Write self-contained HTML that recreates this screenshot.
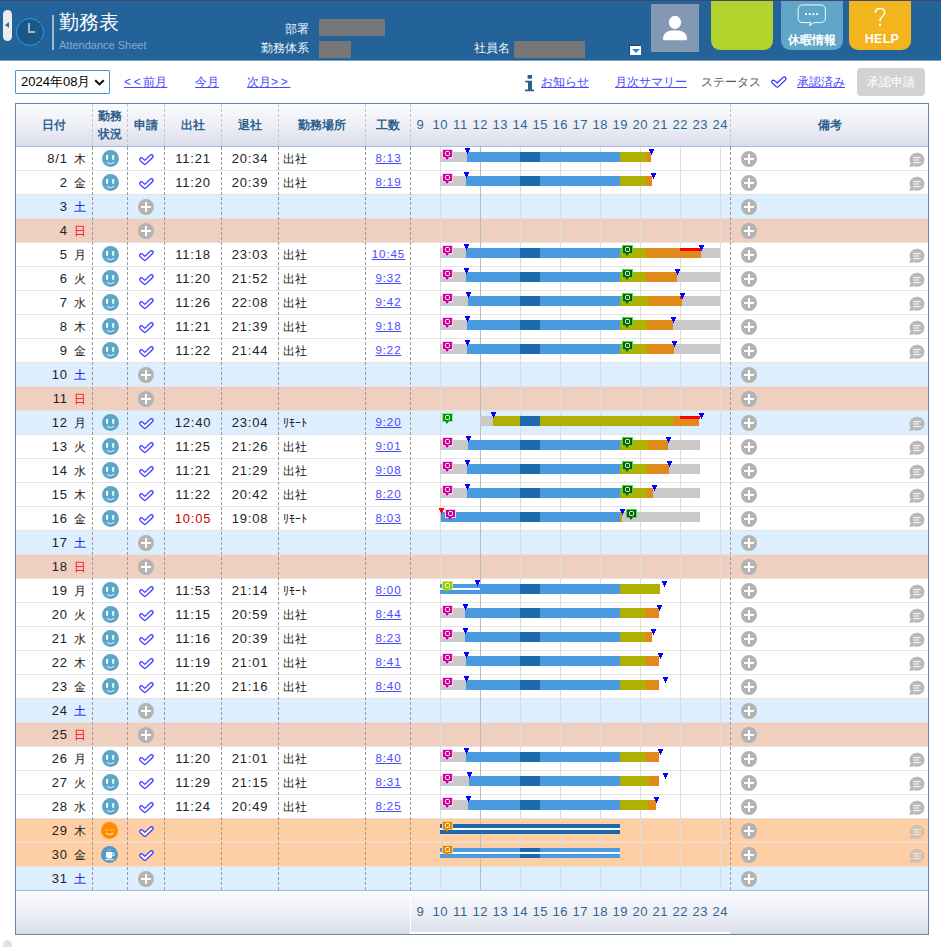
<!-- DOMAINTAG -->
<!DOCTYPE html>
<html lang="ja">
<head>
<meta charset="utf-8">
<title>勤務表</title>
<style>
*{box-sizing:border-box;margin:0;padding:0}
html,body{width:941px;height:947px;overflow:hidden;background:#fff}
body{position:relative;font-family:"Liberation Sans",sans-serif;font-size:12px;color:#222;line-height:1}
i{font-style:normal;display:block}
a{color:#4848ff;text-decoration:underline;cursor:pointer}
.n{font-size:13px;letter-spacing:.75px;line-height:1}a.n{font-size:11.5px;letter-spacing:.9px;position:relative;top:-1px;margin-right:-.9px}
.abs{position:absolute}
/* ---------- header ---------- */
#hd{position:absolute;left:0;top:0;width:941px;height:61px;background:linear-gradient(#236399,#236399 59px,#7ba1c2 59px);border-top:1px solid #40466e}
#tab{position:absolute;left:3px;top:9px;width:9px;height:31px;background:#ededed;border-radius:4.5px}
#tab:after{content:"";position:absolute;left:2px;top:12px;border-top:3px solid transparent;border-bottom:3px solid transparent;border-right:4.5px solid #2a6db3}
#clk{position:absolute;left:15.5px;top:17px;width:28px;height:28px;border-radius:50%;background:#1d5788;border:1.4px solid #1ca2e6}
#clk:before{content:"";position:absolute;left:11.1px;top:3.6px;width:2px;height:10px;background:#a3b8d0}
#clk:after{content:"";position:absolute;left:11.1px;top:11.6px;width:7px;height:2px;background:#a3b8d0}
#vl{position:absolute;left:52px;top:14px;width:2px;height:35px;background:#9fb9d2}
#t1{position:absolute;left:59px;top:10px;font-size:19.5px;line-height:22px;color:#fff;white-space:nowrap}
#t2{position:absolute;left:59px;top:37px;font-size:11px;line-height:14px;color:#86abcd;white-space:nowrap}
.hl{position:absolute;color:#eef3f8;font-size:12px;line-height:16px;white-space:nowrap}
.gb{position:absolute;background:#777;height:17px}
#dd{position:absolute;left:630px;top:45px;width:11px;height:9px;background:#fff;box-shadow:-.7px -.7px 0 .3px #203c78}
#dd:after{content:"";position:absolute;left:1.5px;top:2.5px;border-left:4px solid transparent;border-right:4px solid transparent;border-top:4.5px solid #1c8be0}
#av{position:absolute;left:651px;top:3px;width:48px;height:48px;background:#8399b3}
.hb{position:absolute;top:0;width:62px;height:49px;border-radius:0 0 9px 9px;color:#fff;text-align:center}
/* ---------- toolbar ---------- */
#sel{position:absolute;left:15px;top:70px;width:95px;height:24px;border:1px solid #4f95d0;border-radius:1px;font-size:13px;line-height:22px;padding-left:5px;color:#000;white-space:nowrap}
.lk{position:absolute;top:74px;font-size:12px;line-height:16px;white-space:nowrap}
.sp{letter-spacing:2.7px}
#btn{position:absolute;left:857px;top:68px;width:68px;height:28px;background:#d2d2d2;border-radius:4px;color:#fff;font-size:12px;line-height:28px;text-align:center;white-space:nowrap}
/* ---------- table ---------- */
#frame{position:absolute;left:15px;top:103px;width:914px;height:832px;border:1px solid #6687ab;z-index:9;pointer-events:none}
#th{position:absolute;left:16px;top:104px;width:912px;height:42px;background:linear-gradient(#fafbfd,#eceef5 55%,#dadeea);color:#2c5f8c;font-weight:bold;font-size:12px}
#th div{position:absolute;top:0;height:42px;line-height:42px;text-align:center;white-space:nowrap}
#thl{position:absolute;left:16px;top:146px;width:912px;height:1px;background:#a5bbe4;z-index:5}
.hrs{position:absolute;left:410px;width:320px;height:42px;color:#2e6597;font-size:13px;font-weight:normal;letter-spacing:.75px;white-space:nowrap}
.hrs span{position:absolute;top:0;width:24px;height:42px;line-height:42px;text-align:center;text-indent:.75px}
.dv{position:absolute;top:104px;width:1px;z-index:6}
.dvh{height:42px;background:repeating-linear-gradient(#c2c5d1 0,#c2c5d1 3px,transparent 3px,transparent 5px)}
.dvb{top:147px;height:743px;background:repeating-linear-gradient(#9a9a9a 0,#9a9a9a 3px,transparent 3px,transparent 5px)}
.r{position:absolute;left:16px;width:912px;height:24px;background:#fff;box-shadow:inset 0 1px #e3e3e3}
.sat{background:#ddeeff}
.sun{background:#eecfc0}
.lv{background:#fecfa4}
.c{position:absolute;top:1px;height:23px;line-height:25px;white-space:nowrap;overflow:hidden}
.d{left:0;width:76px;text-align:right;padding-right:6px}.d .n{margin-right:3px}
.sa{color:#00f}.su{color:#f00}
.st{left:77px;width:34px}
.ap{left:112px;width:36px}
.ti{left:149px;width:56px;text-align:center}
.to{left:206px;width:56px;text-align:center}
.lo{left:263px;width:86px;padding-left:4px}
.hr{left:350px;width:44px;text-align:center}
.tl{left:395px;width:319px;top:0;height:24px;overflow:visible;background:linear-gradient(#bbb,#bbb) 69px 0/1px 100% no-repeat,repeating-linear-gradient(90deg,#ddd 0,#ddd 1px,transparent 1px,transparent 40px) 29px 0/300px 100% no-repeat}
.nt{left:715px;width:197px}
.dr{color:#c00}
/* icons */
.fc{position:absolute;left:9px;top:3px;width:17px;height:17px;border-radius:50%;background:#5ba5c6}
.fo{background:#ff8c00;left:8px}.fk{background:#4f9ac8;left:8px}
.pl{position:absolute;left:10px;top:4px;width:16px;height:16px;border-radius:50%;background:#b3b3b3}
.pl:before{content:"";position:absolute;left:3px;top:6.75px;width:10px;height:2.5px;background:#fff}
.pl:after{content:"";position:absolute;left:6.75px;top:3px;width:2.5px;height:10px;background:#fff}
.nt .pl{left:10px}
.ck{position:absolute;left:10px;top:6px}
.lv .cm{opacity:.62}
.cm{position:absolute;left:177px;top:4.5px;width:17px;height:17px}
/* timeline */
.s{position:absolute;top:6px;height:10px}
.gr{background:#c9c9c9}.bl{background:#4a9ae1}.db{background:#1c69ae}.ol{background:#b0b000}.or{background:#e08a1c}.rd{background:#f00}.wh{background:#fff}
.p{position:absolute;top:3px;width:11px;height:9px;border:1px solid;z-index:2}
.p:before{content:"";position:absolute;left:2px;top:1px;width:3px;height:3px;border:1px solid #fff;border-radius:1.5px}
.p:after{content:"";position:absolute;left:2px;top:7px;border-left:2.5px solid transparent;border-right:2.5px solid transparent;border-top:3px solid}
.pk{background:#c09;border-color:#fce;color:#c09}
.gn{background:#060;border-color:#4d5;color:#060}
.g2{background:#090;border-color:#8e8;color:#090}
.yg{background:#9c0;border-color:#ce6;color:#9c0}
.og{background:#d80;border-color:#fc7;color:#d80}
.m{position:absolute;width:5px;height:6px;z-index:3;--c:#00f;background:linear-gradient(var(--c),var(--c)) 0 0/5px 2px no-repeat,linear-gradient(var(--c),var(--c)) 1px 2px/3px 2px no-repeat,linear-gradient(var(--c),var(--c)) 2px 4px/1px 2px no-repeat}
.mr{--c:#f00}
/* footer */
#ft{position:absolute;left:16px;top:890px;width:912px;height:44px;background:linear-gradient(#fafbfd,#eceef5 55%,#dadeea);border-top:1px solid #a5bbe4}
#ftb{position:absolute;left:394px;top:0;width:320px;height:43px;border-left:1px solid #fff;border-bottom:2px solid #fff;border-top:1px solid #fff}
#blob{position:absolute;left:3px;top:940px;width:9px;height:20px;border-radius:4.5px;background:#e3e3e3}
</style>
</head>
<body>
<svg width="0" height="0" style="position:absolute">
<defs>
<symbol id="ck" viewBox="0 0 17 13"><path d="M3.3 6.4 L6.85 9.6 L13.5 3.3" fill="none" stroke="#2424ff" stroke-width="4.4" stroke-linecap="round" stroke-linejoin="round"/><path d="M3.3 6.4 L6.85 9.6 L13.5 3.3" fill="none" stroke="#fff" stroke-width="2.2" stroke-linecap="round" stroke-linejoin="round"/></symbol>
<symbol id="fc" viewBox="0 0 17 17"><rect x="4.1" y="5" width="2" height="4.8" rx=".6" fill="#f4fafc"/><rect x="10.2" y="5" width="2" height="4.8" rx=".6" fill="#f4fafc"/><path d="M4.9 12.1 Q8.4 14.9 12 12.1" fill="none" stroke="#dcedf4" stroke-width="1.2"/></symbol>
<symbol id="fo" viewBox="0 0 17 17"><path d="M3.8 7.6 Q5.6 9.3 7.3 7.6 M9.7 7.6 Q11.4 9.3 13.2 7.6" fill="none" stroke="#ffc98c" stroke-width="1"/><path d="M4.8 11 Q8.5 14.2 12.2 11" fill="none" stroke="#ffd9ae" stroke-width="1.2"/></symbol>
<symbol id="fk" viewBox="0 0 17 17"><path d="M5 6 H11.2 V10.2 Q11.2 12.4 9 12.4 H7.2 Q5 12.4 5 10.2Z" fill="#fff"/><path d="M11.2 7 H12.2 Q13.4 7 13.4 8.3 Q13.4 9.6 12.2 9.6 H11.2" fill="none" stroke="#fff" stroke-width="1"/><rect x="4" y="13.2" width="9" height="1" fill="#e8f2f8"/><path d="M6.5 4.3 Q7.3 3.3 8.2 4.1 T9.8 3.8" fill="none" stroke="#cfe3ef" stroke-width=".7"/></symbol>
<symbol id="cm" viewBox="0 0 17 17"><ellipse cx="9" cy="7.8" rx="7.5" ry="7" fill="#b8b8b8"/><path d="M2.6 11 L1.1 14.9 L6.5 14.2Z" fill="#b8b8b8"/><rect x="5.1" y="5.1" width="7.8" height="1" fill="#fafafa"/><rect x="5.5" y="6.9" width="5.5" height="2" fill="#e0e0e0"/><rect x="5.1" y="10.1" width="7.8" height="1" fill="#fafafa"/></symbol>
</defs>
</svg>

<!-- header -->
<div id="hd">
 <div id="tab"></div>
 <div id="clk"></div>
 <div id="vl"></div>
 <div id="t1">勤務表</div>
 <div id="t2">Attendance Sheet</div>
 <div class="hl" style="left:248px;width:61px;text-align:right;top:20px">部署</div>
 <div class="gb" style="left:319px;top:18px;width:66px"></div>
 <div class="hl" style="left:248px;width:61px;text-align:right;top:39px">勤務体系</div>
 <div class="gb" style="left:319px;top:40px;width:32px"></div>
 <div class="hl" style="left:474px;top:39px">社員名</div>
 <div class="gb" style="left:514px;top:40px;width:71px"></div>
 <div id="dd"></div>
 <div id="av"><svg width="48" height="48" viewBox="0 0 48 48"><ellipse cx="24" cy="18.4" rx="6.1" ry="6.6" fill="#fff"/><path d="M12 34.9 Q12 26.2 24 26.2 Q36 26.2 36 34.9 Q36 36.2 34.6 36.2 L13.4 36.2 Q12 36.2 12 34.9Z" fill="#fff"/></svg></div>
 <div class="hb" style="left:711px;background:#b2d32b"></div>
 <div class="hb" style="left:781px;background:#5fa6c8">
  <svg width="62" height="30" viewBox="0 0 62 30" style="position:absolute;left:0;top:0"><path d="M22 3.9 H39.5 Q44.4 3.9 44.4 8.8 V16.7 Q44.4 21.6 39.5 21.6 H33.2 L28.4 24.8 L29.9 21.6 H22 Q17.1 21.6 17.1 16.7 V8.8 Q17.1 3.9 22 3.9Z" fill="none" stroke="#f4f8fb" stroke-width="1"/><rect x="24" y="12.2" width="1.9" height="1.9" fill="#fff"/><rect x="27.7" y="12.2" width="1.9" height="1.9" fill="#fff"/><rect x="31.5" y="12.2" width="1.9" height="1.9" fill="#fff"/><rect x="35.2" y="12.2" width="1.9" height="1.9" fill="#fff"/></svg>
  <div style="position:absolute;left:0;top:30.5px;width:62px;font-size:12px;line-height:16px;font-weight:bold;white-space:nowrap">休暇情報</div>
 </div>
 <div class="hb" style="left:849px;background:#f2b51e">
  <svg width="62" height="30" viewBox="0 0 62 30" style="position:absolute;left:0;top:0"><path d="M26.3 12 Q26.3 7.6 31 7.6 Q35.7 7.6 35.7 11.6 Q35.7 14 33 16 Q31 17.6 31 20.2" fill="none" stroke="#fff" stroke-width="1.5"/><rect x="30.1" y="22.6" width="1.9" height="2.2" fill="#fff"/></svg>
  <div style="position:absolute;left:0;top:30px;width:62px;font-size:12.5px;line-height:17px;font-weight:bold;letter-spacing:.3px;text-indent:4px">HELP</div>
 </div>
</div>

<!-- toolbar -->
<div id="sel">2024年08月<svg width="11" height="7" viewBox="0 0 11 7" style="position:absolute;left:78px;top:8px"><path d="M1.2 1.2 L5.5 5.4 L9.8 1.2" fill="none" stroke="#111" stroke-width="2.1"/></svg></div>
<a class="lk" style="left:124px"><span class="sp">&lt;&lt;</span>前月</a>
<a class="lk" style="left:195px">今月</a>
<a class="lk" style="left:247px">次月<span class="sp">&gt;&gt;</span></a>
<svg class="abs" style="left:524px;top:74px" width="11" height="18" viewBox="0 0 11 18"><path d="M3.6 1 H8 V4.8 H3.6Z M1.2 6.8 H8 V15.4 H10 V17.2 H1 V15.4 H4 V8.4 H1.2Z" fill="#2c5f8c"/></svg>
<a class="lk" style="left:541px">お知らせ</a>
<a class="lk" style="left:615px">月次サマリー</a>
<div class="lk" style="left:701px;color:#555">ステータス</div>
<svg class="abs" style="left:770px;top:75px" width="18" height="14" viewBox="0 0 17 13"><use href="#ck"/></svg>
<a class="lk" style="left:797px">承認済み</a>
<div id="btn">承認申請</div>

<!-- table -->
<div id="frame"></div>
<div id="th">
 <div style="left:0;width:76px">日付</div>
 <div style="left:77px;width:34px;line-height:18px;padding-top:3px">勤務<br>状況</div>
 <div style="left:112px;width:36px">申請</div>
 <div style="left:149px;width:56px">出社</div>
 <div style="left:206px;width:56px">退社</div>
 <div style="left:263px;width:86px">勤務場所</div>
 <div style="left:350px;width:44px">工数</div>
 <div class="hrs" style="left:394px"><span style="left:-2px">9</span><span style="left:18px">10</span><span style="left:38px">11</span><span style="left:58px">12</span><span style="left:78px">13</span><span style="left:98px">14</span><span style="left:118px">15</span><span style="left:138px">16</span><span style="left:158px">17</span><span style="left:178px">18</span><span style="left:198px">19</span><span style="left:218px">20</span><span style="left:238px">21</span><span style="left:258px">22</span><span style="left:278px">23</span><span style="left:298px">24</span></div>
 <div style="left:715px;width:197px">備考</div>
</div>
<div id="thl"></div>
<i class="dv dvh" style="left:92px"></i><i class="dv dvb" style="left:92px"></i><i class="dv dvh" style="left:127px"></i><i class="dv dvb" style="left:127px"></i><i class="dv dvh" style="left:164px"></i><i class="dv dvb" style="left:164px"></i><i class="dv dvh" style="left:221px"></i><i class="dv dvb" style="left:221px"></i><i class="dv dvh" style="left:278px"></i><i class="dv dvb" style="left:278px"></i><i class="dv dvh" style="left:365px"></i><i class="dv dvb" style="left:365px"></i><i class="dv dvh" style="left:410px"></i><i class="dv dvb" style="left:410px"></i><i class="dv dvh" style="left:730px"></i><i class="dv dvb" style="left:730px"></i>
<div class="r" style="top:146px"><div class="c d"><span class="n">8/1</span> <span>木</span></div><div class="c st"><svg class="fc" width="17" height="17" viewBox="0 0 17 17"><use href="#fc"/></svg></div><div class="c ap"><svg class="ck" width="17" height="13" viewBox="0 0 17 13"><use href="#ck"/></svg></div><div class="c ti"><span class="n">11:21</span></div><div class="c to"><span class="n">20:34</span></div><div class="c lo">出社</div><div class="c hr"><a class="n">8:13</a></div><div class="c tl"><i class="s gr" style="left:29px;width:27px"></i><i class="s bl" style="left:56px;width:153px"></i><i class="s db" style="left:109px;width:20px"></i><i class="s ol" style="left:209px;width:27px"></i><i class="s or" style="left:236px;width:4px"></i><i class="p pk" style="left:31px"></i><i class="m mb" style="left:54px;top:2px"></i><i class="m mb" style="left:238px;top:3px"></i></div><div class="c nt"><i class="pl"></i><svg class="cm" width="17" height="17" viewBox="0 0 17 17"><use href="#cm"/></svg></div></div>
<div class="r" style="top:170px"><div class="c d"><span class="n">2</span> <span>金</span></div><div class="c st"><svg class="fc" width="17" height="17" viewBox="0 0 17 17"><use href="#fc"/></svg></div><div class="c ap"><svg class="ck" width="17" height="13" viewBox="0 0 17 13"><use href="#ck"/></svg></div><div class="c ti"><span class="n">11:20</span></div><div class="c to"><span class="n">20:39</span></div><div class="c lo">出社</div><div class="c hr"><a class="n">8:19</a></div><div class="c tl"><i class="s gr" style="left:29px;width:26px"></i><i class="s bl" style="left:55px;width:154px"></i><i class="s db" style="left:109px;width:20px"></i><i class="s ol" style="left:209px;width:26px"></i><i class="s or" style="left:235px;width:6px"></i><i class="p pk" style="left:31px"></i><i class="m mb" style="left:53px;top:2px"></i><i class="m mb" style="left:240px;top:3px"></i></div><div class="c nt"><i class="pl"></i><svg class="cm" width="17" height="17" viewBox="0 0 17 17"><use href="#cm"/></svg></div></div>
<div class="r sat" style="top:194px"><div class="c d"><span class="n">3</span> <span class="sa">土</span></div><div class="c st"></div><div class="c ap"><i class="pl"></i></div><div class="c ti"></div><div class="c to"></div><div class="c lo"></div><div class="c hr"></div><div class="c tl"></div><div class="c nt"><i class="pl"></i></div></div>
<div class="r sun" style="top:218px"><div class="c d"><span class="n">4</span> <span class="su">日</span></div><div class="c st"></div><div class="c ap"><i class="pl"></i></div><div class="c ti"></div><div class="c to"></div><div class="c lo"></div><div class="c hr"></div><div class="c tl"></div><div class="c nt"><i class="pl"></i></div></div>
<div class="r" style="top:242px"><div class="c d"><span class="n">5</span> <span>月</span></div><div class="c st"><svg class="fc" width="17" height="17" viewBox="0 0 17 17"><use href="#fc"/></svg></div><div class="c ap"><svg class="ck" width="17" height="13" viewBox="0 0 17 13"><use href="#ck"/></svg></div><div class="c ti"><span class="n">11:18</span></div><div class="c to"><span class="n">23:03</span></div><div class="c lo">出社</div><div class="c hr"><a class="n">10:45</a></div><div class="c tl"><i class="s gr" style="left:29px;width:26px"></i><i class="s bl" style="left:55px;width:154px"></i><i class="s db" style="left:109px;width:20px"></i><i class="s ol" style="left:209px;width:26px"></i><i class="s or" style="left:235px;width:55px"></i><i class="s rd" style="left:269px;width:21px;top:6px;height:3px"></i><i class="s gr" style="left:290px;width:19px"></i><i class="p pk" style="left:31px"></i><i class="p gn" style="left:211px"></i><i class="m mb" style="left:53px;top:2px"></i><i class="m mb" style="left:288px;top:3px"></i></div><div class="c nt"><i class="pl"></i><svg class="cm" width="17" height="17" viewBox="0 0 17 17"><use href="#cm"/></svg></div></div>
<div class="r" style="top:266px"><div class="c d"><span class="n">6</span> <span>火</span></div><div class="c st"><svg class="fc" width="17" height="17" viewBox="0 0 17 17"><use href="#fc"/></svg></div><div class="c ap"><svg class="ck" width="17" height="13" viewBox="0 0 17 13"><use href="#ck"/></svg></div><div class="c ti"><span class="n">11:20</span></div><div class="c to"><span class="n">21:52</span></div><div class="c lo">出社</div><div class="c hr"><a class="n">9:32</a></div><div class="c tl"><i class="s gr" style="left:29px;width:26px"></i><i class="s bl" style="left:55px;width:154px"></i><i class="s db" style="left:109px;width:20px"></i><i class="s ol" style="left:209px;width:26px"></i><i class="s or" style="left:235px;width:31px"></i><i class="s gr" style="left:266px;width:43px"></i><i class="p pk" style="left:31px"></i><i class="p gn" style="left:211px"></i><i class="m mb" style="left:53px;top:2px"></i><i class="m mb" style="left:264px;top:3px"></i></div><div class="c nt"><i class="pl"></i><svg class="cm" width="17" height="17" viewBox="0 0 17 17"><use href="#cm"/></svg></div></div>
<div class="r" style="top:290px"><div class="c d"><span class="n">7</span> <span>水</span></div><div class="c st"><svg class="fc" width="17" height="17" viewBox="0 0 17 17"><use href="#fc"/></svg></div><div class="c ap"><svg class="ck" width="17" height="13" viewBox="0 0 17 13"><use href="#ck"/></svg></div><div class="c ti"><span class="n">11:26</span></div><div class="c to"><span class="n">22:08</span></div><div class="c lo">出社</div><div class="c hr"><a class="n">9:42</a></div><div class="c tl"><i class="s gr" style="left:29px;width:28px"></i><i class="s bl" style="left:57px;width:152px"></i><i class="s db" style="left:109px;width:20px"></i><i class="s ol" style="left:209px;width:28px"></i><i class="s or" style="left:237px;width:34px"></i><i class="s rd" style="left:269px;width:2px;top:6px;height:3px"></i><i class="s gr" style="left:271px;width:38px"></i><i class="p pk" style="left:31px"></i><i class="p gn" style="left:211px"></i><i class="m mb" style="left:55px;top:2px"></i><i class="m mb" style="left:269px;top:3px"></i></div><div class="c nt"><i class="pl"></i><svg class="cm" width="17" height="17" viewBox="0 0 17 17"><use href="#cm"/></svg></div></div>
<div class="r" style="top:314px"><div class="c d"><span class="n">8</span> <span>木</span></div><div class="c st"><svg class="fc" width="17" height="17" viewBox="0 0 17 17"><use href="#fc"/></svg></div><div class="c ap"><svg class="ck" width="17" height="13" viewBox="0 0 17 13"><use href="#ck"/></svg></div><div class="c ti"><span class="n">11:21</span></div><div class="c to"><span class="n">21:39</span></div><div class="c lo">出社</div><div class="c hr"><a class="n">9:18</a></div><div class="c tl"><i class="s gr" style="left:29px;width:27px"></i><i class="s bl" style="left:56px;width:153px"></i><i class="s db" style="left:109px;width:20px"></i><i class="s ol" style="left:209px;width:27px"></i><i class="s or" style="left:236px;width:26px"></i><i class="s gr" style="left:262px;width:47px"></i><i class="p pk" style="left:31px"></i><i class="p gn" style="left:211px"></i><i class="m mb" style="left:54px;top:2px"></i><i class="m mb" style="left:260px;top:3px"></i></div><div class="c nt"><i class="pl"></i><svg class="cm" width="17" height="17" viewBox="0 0 17 17"><use href="#cm"/></svg></div></div>
<div class="r" style="top:338px"><div class="c d"><span class="n">9</span> <span>金</span></div><div class="c st"><svg class="fc" width="17" height="17" viewBox="0 0 17 17"><use href="#fc"/></svg></div><div class="c ap"><svg class="ck" width="17" height="13" viewBox="0 0 17 13"><use href="#ck"/></svg></div><div class="c ti"><span class="n">11:22</span></div><div class="c to"><span class="n">21:44</span></div><div class="c lo">出社</div><div class="c hr"><a class="n">9:22</a></div><div class="c tl"><i class="s gr" style="left:29px;width:27px"></i><i class="s bl" style="left:56px;width:153px"></i><i class="s db" style="left:109px;width:20px"></i><i class="s ol" style="left:209px;width:27px"></i><i class="s or" style="left:236px;width:27px"></i><i class="s gr" style="left:263px;width:46px"></i><i class="p pk" style="left:31px"></i><i class="p gn" style="left:211px"></i><i class="m mb" style="left:54px;top:2px"></i><i class="m mb" style="left:261px;top:3px"></i></div><div class="c nt"><i class="pl"></i><svg class="cm" width="17" height="17" viewBox="0 0 17 17"><use href="#cm"/></svg></div></div>
<div class="r sat" style="top:362px"><div class="c d"><span class="n">10</span> <span class="sa">土</span></div><div class="c st"></div><div class="c ap"><i class="pl"></i></div><div class="c ti"></div><div class="c to"></div><div class="c lo"></div><div class="c hr"></div><div class="c tl"></div><div class="c nt"><i class="pl"></i></div></div>
<div class="r sun" style="top:386px"><div class="c d"><span class="n">11</span> <span class="su">日</span></div><div class="c st"></div><div class="c ap"><i class="pl"></i></div><div class="c ti"></div><div class="c to"></div><div class="c lo"></div><div class="c hr"></div><div class="c tl"></div><div class="c nt"><i class="pl"></i></div></div>
<div class="r sat" style="top:410px"><div class="c d"><span class="n">12</span> <span>月</span></div><div class="c st"><svg class="fc" width="17" height="17" viewBox="0 0 17 17"><use href="#fc"/></svg></div><div class="c ap"><svg class="ck" width="17" height="13" viewBox="0 0 17 13"><use href="#ck"/></svg></div><div class="c ti"><span class="n">12:40</span></div><div class="c to"><span class="n">23:04</span></div><div class="c lo">ﾘﾓｰﾄ</div><div class="c hr"><a class="n">9:20</a></div><div class="c tl"><i class="s gr" style="left:69px;width:13px"></i><i class="s ol" style="left:82px;width:180px"></i><i class="s db" style="left:109px;width:20px"></i><i class="s or" style="left:262px;width:26px"></i><i class="s rd" style="left:269px;width:20px;top:6px;height:3px"></i><i class="p g2" style="left:31px"></i><i class="m mb" style="left:80px;top:2px"></i><i class="m mb" style="left:288px;top:3px"></i></div><div class="c nt"><i class="pl"></i><svg class="cm" width="17" height="17" viewBox="0 0 17 17"><use href="#cm"/></svg></div></div>
<div class="r" style="top:434px"><div class="c d"><span class="n">13</span> <span>火</span></div><div class="c st"><svg class="fc" width="17" height="17" viewBox="0 0 17 17"><use href="#fc"/></svg></div><div class="c ap"><svg class="ck" width="17" height="13" viewBox="0 0 17 13"><use href="#ck"/></svg></div><div class="c ti"><span class="n">11:25</span></div><div class="c to"><span class="n">21:26</span></div><div class="c lo">出社</div><div class="c hr"><a class="n">9:01</a></div><div class="c tl"><i class="s gr" style="left:29px;width:28px"></i><i class="s bl" style="left:57px;width:152px"></i><i class="s db" style="left:109px;width:20px"></i><i class="s ol" style="left:209px;width:28px"></i><i class="s or" style="left:237px;width:20px"></i><i class="s gr" style="left:257px;width:32px"></i><i class="p pk" style="left:31px"></i><i class="p gn" style="left:211px"></i><i class="m mb" style="left:55px;top:2px"></i><i class="m mb" style="left:255px;top:3px"></i></div><div class="c nt"><i class="pl"></i><svg class="cm" width="17" height="17" viewBox="0 0 17 17"><use href="#cm"/></svg></div></div>
<div class="r" style="top:458px"><div class="c d"><span class="n">14</span> <span>水</span></div><div class="c st"><svg class="fc" width="17" height="17" viewBox="0 0 17 17"><use href="#fc"/></svg></div><div class="c ap"><svg class="ck" width="17" height="13" viewBox="0 0 17 13"><use href="#ck"/></svg></div><div class="c ti"><span class="n">11:21</span></div><div class="c to"><span class="n">21:29</span></div><div class="c lo">出社</div><div class="c hr"><a class="n">9:08</a></div><div class="c tl"><i class="s gr" style="left:29px;width:27px"></i><i class="s bl" style="left:56px;width:153px"></i><i class="s db" style="left:109px;width:20px"></i><i class="s ol" style="left:209px;width:27px"></i><i class="s or" style="left:236px;width:22px"></i><i class="s gr" style="left:258px;width:31px"></i><i class="p pk" style="left:31px"></i><i class="p gn" style="left:211px"></i><i class="m mb" style="left:54px;top:2px"></i><i class="m mb" style="left:256px;top:3px"></i></div><div class="c nt"><i class="pl"></i><svg class="cm" width="17" height="17" viewBox="0 0 17 17"><use href="#cm"/></svg></div></div>
<div class="r" style="top:482px"><div class="c d"><span class="n">15</span> <span>木</span></div><div class="c st"><svg class="fc" width="17" height="17" viewBox="0 0 17 17"><use href="#fc"/></svg></div><div class="c ap"><svg class="ck" width="17" height="13" viewBox="0 0 17 13"><use href="#ck"/></svg></div><div class="c ti"><span class="n">11:22</span></div><div class="c to"><span class="n">20:42</span></div><div class="c lo">出社</div><div class="c hr"><a class="n">8:20</a></div><div class="c tl"><i class="s gr" style="left:29px;width:27px"></i><i class="s bl" style="left:56px;width:153px"></i><i class="s db" style="left:109px;width:20px"></i><i class="s ol" style="left:209px;width:27px"></i><i class="s or" style="left:236px;width:6px"></i><i class="s gr" style="left:242px;width:47px"></i><i class="p pk" style="left:31px"></i><i class="p gn" style="left:211px"></i><i class="m mb" style="left:54px;top:2px"></i><i class="m mb" style="left:241px;top:3px"></i></div><div class="c nt"><i class="pl"></i><svg class="cm" width="17" height="17" viewBox="0 0 17 17"><use href="#cm"/></svg></div></div>
<div class="r" style="top:506px"><div class="c d"><span class="n">16</span> <span>金</span></div><div class="c st"><svg class="fc" width="17" height="17" viewBox="0 0 17 17"><use href="#fc"/></svg></div><div class="c ap"><svg class="ck" width="17" height="13" viewBox="0 0 17 13"><use href="#ck"/></svg></div><div class="c ti"><span class="n dr">10:05</span></div><div class="c to"><span class="n">19:08</span></div><div class="c lo">ﾘﾓｰﾄ</div><div class="c hr"><a class="n">8:03</a></div><div class="c tl"><i class="s gr" style="left:29px;width:1px"></i><i class="s bl" style="left:30px;width:179px"></i><i class="s db" style="left:109px;width:20px"></i><i class="s ol" style="left:209px;width:1px"></i><i class="s or" style="left:210px;width:1px"></i><i class="s gr" style="left:211px;width:78px"></i><i class="p pk" style="left:34px"></i><i class="p gn" style="left:215px"></i><i class="m mr" style="left:28px;top:2px"></i><i class="m mb" style="left:209px;top:3px"></i></div><div class="c nt"><i class="pl"></i><svg class="cm" width="17" height="17" viewBox="0 0 17 17"><use href="#cm"/></svg></div></div>
<div class="r sat" style="top:530px"><div class="c d"><span class="n">17</span> <span class="sa">土</span></div><div class="c st"></div><div class="c ap"><i class="pl"></i></div><div class="c ti"></div><div class="c to"></div><div class="c lo"></div><div class="c hr"></div><div class="c tl"></div><div class="c nt"><i class="pl"></i></div></div>
<div class="r sun" style="top:554px"><div class="c d"><span class="n">18</span> <span class="su">日</span></div><div class="c st"></div><div class="c ap"><i class="pl"></i></div><div class="c ti"></div><div class="c to"></div><div class="c lo"></div><div class="c hr"></div><div class="c tl"></div><div class="c nt"><i class="pl"></i></div></div>
<div class="r" style="top:578px"><div class="c d"><span class="n">19</span> <span>月</span></div><div class="c st"><svg class="fc" width="17" height="17" viewBox="0 0 17 17"><use href="#fc"/></svg></div><div class="c ap"><svg class="ck" width="17" height="13" viewBox="0 0 17 13"><use href="#ck"/></svg></div><div class="c ti"><span class="n">11:53</span></div><div class="c to"><span class="n">21:14</span></div><div class="c lo">ﾘﾓｰﾄ</div><div class="c hr"><a class="n">8:00</a></div><div class="c tl"><i class="s bl" style="left:29px;width:180px"></i><i class="s db" style="left:109px;width:20px"></i><i class="s wh" style="left:29px;width:40px;top:10px;height:2px"></i><i class="s ol" style="left:209px;width:40px"></i><i class="p yg" style="left:31px"></i><i class="m mb" style="left:64px;top:2px"></i><i class="m mb" style="left:251px;top:3px"></i></div><div class="c nt"><i class="pl"></i><svg class="cm" width="17" height="17" viewBox="0 0 17 17"><use href="#cm"/></svg></div></div>
<div class="r" style="top:602px"><div class="c d"><span class="n">20</span> <span>火</span></div><div class="c st"><svg class="fc" width="17" height="17" viewBox="0 0 17 17"><use href="#fc"/></svg></div><div class="c ap"><svg class="ck" width="17" height="13" viewBox="0 0 17 13"><use href="#ck"/></svg></div><div class="c ti"><span class="n">11:15</span></div><div class="c to"><span class="n">20:59</span></div><div class="c lo">出社</div><div class="c hr"><a class="n">8:44</a></div><div class="c tl"><i class="s gr" style="left:29px;width:25px"></i><i class="s bl" style="left:54px;width:155px"></i><i class="s db" style="left:109px;width:20px"></i><i class="s ol" style="left:209px;width:25px"></i><i class="s or" style="left:234px;width:14px"></i><i class="p pk" style="left:31px"></i><i class="m mb" style="left:52px;top:2px"></i><i class="m mb" style="left:246px;top:3px"></i></div><div class="c nt"><i class="pl"></i><svg class="cm" width="17" height="17" viewBox="0 0 17 17"><use href="#cm"/></svg></div></div>
<div class="r" style="top:626px"><div class="c d"><span class="n">21</span> <span>水</span></div><div class="c st"><svg class="fc" width="17" height="17" viewBox="0 0 17 17"><use href="#fc"/></svg></div><div class="c ap"><svg class="ck" width="17" height="13" viewBox="0 0 17 13"><use href="#ck"/></svg></div><div class="c ti"><span class="n">11:16</span></div><div class="c to"><span class="n">20:39</span></div><div class="c lo">出社</div><div class="c hr"><a class="n">8:23</a></div><div class="c tl"><i class="s gr" style="left:29px;width:25px"></i><i class="s bl" style="left:54px;width:155px"></i><i class="s db" style="left:109px;width:20px"></i><i class="s ol" style="left:209px;width:25px"></i><i class="s or" style="left:234px;width:7px"></i><i class="p pk" style="left:31px"></i><i class="m mb" style="left:52px;top:2px"></i><i class="m mb" style="left:240px;top:3px"></i></div><div class="c nt"><i class="pl"></i><svg class="cm" width="17" height="17" viewBox="0 0 17 17"><use href="#cm"/></svg></div></div>
<div class="r" style="top:650px"><div class="c d"><span class="n">22</span> <span>木</span></div><div class="c st"><svg class="fc" width="17" height="17" viewBox="0 0 17 17"><use href="#fc"/></svg></div><div class="c ap"><svg class="ck" width="17" height="13" viewBox="0 0 17 13"><use href="#ck"/></svg></div><div class="c ti"><span class="n">11:19</span></div><div class="c to"><span class="n">21:01</span></div><div class="c lo">出社</div><div class="c hr"><a class="n">8:41</a></div><div class="c tl"><i class="s gr" style="left:29px;width:26px"></i><i class="s bl" style="left:55px;width:154px"></i><i class="s db" style="left:109px;width:20px"></i><i class="s ol" style="left:209px;width:26px"></i><i class="s or" style="left:235px;width:13px"></i><i class="p pk" style="left:31px"></i><i class="m mb" style="left:53px;top:2px"></i><i class="m mb" style="left:247px;top:3px"></i></div><div class="c nt"><i class="pl"></i><svg class="cm" width="17" height="17" viewBox="0 0 17 17"><use href="#cm"/></svg></div></div>
<div class="r" style="top:674px"><div class="c d"><span class="n">23</span> <span>金</span></div><div class="c st"><svg class="fc" width="17" height="17" viewBox="0 0 17 17"><use href="#fc"/></svg></div><div class="c ap"><svg class="ck" width="17" height="13" viewBox="0 0 17 13"><use href="#ck"/></svg></div><div class="c ti"><span class="n">11:20</span></div><div class="c to"><span class="n">21:16</span></div><div class="c lo">出社</div><div class="c hr"><a class="n">8:40</a></div><div class="c tl"><i class="s gr" style="left:29px;width:26px"></i><i class="s bl" style="left:55px;width:154px"></i><i class="s db" style="left:109px;width:20px"></i><i class="s ol" style="left:209px;width:26px"></i><i class="s or" style="left:235px;width:13px"></i><i class="p pk" style="left:31px"></i><i class="m mb" style="left:53px;top:2px"></i><i class="m mb" style="left:252px;top:3px"></i></div><div class="c nt"><i class="pl"></i><svg class="cm" width="17" height="17" viewBox="0 0 17 17"><use href="#cm"/></svg></div></div>
<div class="r sat" style="top:698px"><div class="c d"><span class="n">24</span> <span class="sa">土</span></div><div class="c st"></div><div class="c ap"><i class="pl"></i></div><div class="c ti"></div><div class="c to"></div><div class="c lo"></div><div class="c hr"></div><div class="c tl"></div><div class="c nt"><i class="pl"></i></div></div>
<div class="r sun" style="top:722px"><div class="c d"><span class="n">25</span> <span class="su">日</span></div><div class="c st"></div><div class="c ap"><i class="pl"></i></div><div class="c ti"></div><div class="c to"></div><div class="c lo"></div><div class="c hr"></div><div class="c tl"></div><div class="c nt"><i class="pl"></i></div></div>
<div class="r" style="top:746px"><div class="c d"><span class="n">26</span> <span>月</span></div><div class="c st"><svg class="fc" width="17" height="17" viewBox="0 0 17 17"><use href="#fc"/></svg></div><div class="c ap"><svg class="ck" width="17" height="13" viewBox="0 0 17 13"><use href="#ck"/></svg></div><div class="c ti"><span class="n">11:20</span></div><div class="c to"><span class="n">21:01</span></div><div class="c lo">出社</div><div class="c hr"><a class="n">8:40</a></div><div class="c tl"><i class="s gr" style="left:29px;width:26px"></i><i class="s bl" style="left:55px;width:154px"></i><i class="s db" style="left:109px;width:20px"></i><i class="s ol" style="left:209px;width:26px"></i><i class="s or" style="left:235px;width:13px"></i><i class="p pk" style="left:31px"></i><i class="m mb" style="left:53px;top:2px"></i><i class="m mb" style="left:247px;top:3px"></i></div><div class="c nt"><i class="pl"></i><svg class="cm" width="17" height="17" viewBox="0 0 17 17"><use href="#cm"/></svg></div></div>
<div class="r" style="top:770px"><div class="c d"><span class="n">27</span> <span>火</span></div><div class="c st"><svg class="fc" width="17" height="17" viewBox="0 0 17 17"><use href="#fc"/></svg></div><div class="c ap"><svg class="ck" width="17" height="13" viewBox="0 0 17 13"><use href="#ck"/></svg></div><div class="c ti"><span class="n">11:29</span></div><div class="c to"><span class="n">21:15</span></div><div class="c lo">出社</div><div class="c hr"><a class="n">8:31</a></div><div class="c tl"><i class="s gr" style="left:29px;width:29px"></i><i class="s bl" style="left:58px;width:151px"></i><i class="s db" style="left:109px;width:20px"></i><i class="s ol" style="left:209px;width:29px"></i><i class="s or" style="left:238px;width:10px"></i><i class="p pk" style="left:31px"></i><i class="m mb" style="left:56px;top:2px"></i><i class="m mb" style="left:252px;top:3px"></i></div><div class="c nt"><i class="pl"></i><svg class="cm" width="17" height="17" viewBox="0 0 17 17"><use href="#cm"/></svg></div></div>
<div class="r" style="top:794px"><div class="c d"><span class="n">28</span> <span>水</span></div><div class="c st"><svg class="fc" width="17" height="17" viewBox="0 0 17 17"><use href="#fc"/></svg></div><div class="c ap"><svg class="ck" width="17" height="13" viewBox="0 0 17 13"><use href="#ck"/></svg></div><div class="c ti"><span class="n">11:24</span></div><div class="c to"><span class="n">20:49</span></div><div class="c lo">出社</div><div class="c hr"><a class="n">8:25</a></div><div class="c tl"><i class="s gr" style="left:29px;width:28px"></i><i class="s bl" style="left:57px;width:152px"></i><i class="s db" style="left:109px;width:20px"></i><i class="s ol" style="left:209px;width:28px"></i><i class="s or" style="left:237px;width:8px"></i><i class="p pk" style="left:31px"></i><i class="m mb" style="left:55px;top:2px"></i><i class="m mb" style="left:243px;top:3px"></i></div><div class="c nt"><i class="pl"></i><svg class="cm" width="17" height="17" viewBox="0 0 17 17"><use href="#cm"/></svg></div></div>
<div class="r lv" style="top:818px"><div class="c d"><span class="n">29</span> <span>木</span></div><div class="c st"><svg class="fc fo" width="17" height="17" viewBox="0 0 17 17"><use href="#fo"/></svg></div><div class="c ap"><svg class="ck" width="17" height="13" viewBox="0 0 17 13"><use href="#ck"/></svg></div><div class="c ti"></div><div class="c to"></div><div class="c lo"></div><div class="c hr"></div><div class="c tl"><i class="s db" style="left:29px;width:180px"></i><i class="s wh" style="left:29px;width:180px;top:10px;height:2px"></i><i class="p og" style="left:31px"></i></div><div class="c nt"><i class="pl"></i><svg class="cm" width="17" height="17" viewBox="0 0 17 17"><use href="#cm"/></svg></div></div>
<div class="r lv" style="top:842px"><div class="c d"><span class="n">30</span> <span>金</span></div><div class="c st"><svg class="fc fk" width="17" height="17" viewBox="0 0 17 17"><use href="#fk"/></svg></div><div class="c ap"><svg class="ck" width="17" height="13" viewBox="0 0 17 13"><use href="#ck"/></svg></div><div class="c ti"></div><div class="c to"></div><div class="c lo"></div><div class="c hr"></div><div class="c tl"><i class="s bl" style="left:29px;width:180px"></i><i class="s db" style="left:109px;width:20px"></i><i class="s wh" style="left:29px;width:180px;top:10px;height:2px"></i><i class="p og" style="left:31px"></i></div><div class="c nt"><i class="pl"></i><svg class="cm" width="17" height="17" viewBox="0 0 17 17"><use href="#cm"/></svg></div></div>
<div class="r sat" style="top:866px"><div class="c d"><span class="n">31</span> <span class="sa">土</span></div><div class="c st"></div><div class="c ap"><i class="pl"></i></div><div class="c ti"></div><div class="c to"></div><div class="c lo"></div><div class="c hr"></div><div class="c tl"></div><div class="c nt"><i class="pl"></i></div></div>
<div id="ft"><div id="ftb"><div class="hrs" style="left:-1px;top:-1px"><span style="left:-2px">9</span><span style="left:18px">10</span><span style="left:38px">11</span><span style="left:58px">12</span><span style="left:78px">13</span><span style="left:98px">14</span><span style="left:118px">15</span><span style="left:138px">16</span><span style="left:158px">17</span><span style="left:178px">18</span><span style="left:198px">19</span><span style="left:218px">20</span><span style="left:238px">21</span><span style="left:258px">22</span><span style="left:278px">23</span><span style="left:298px">24</span></div></div></div>
<div id="blob"></div>
</body>
</html>
